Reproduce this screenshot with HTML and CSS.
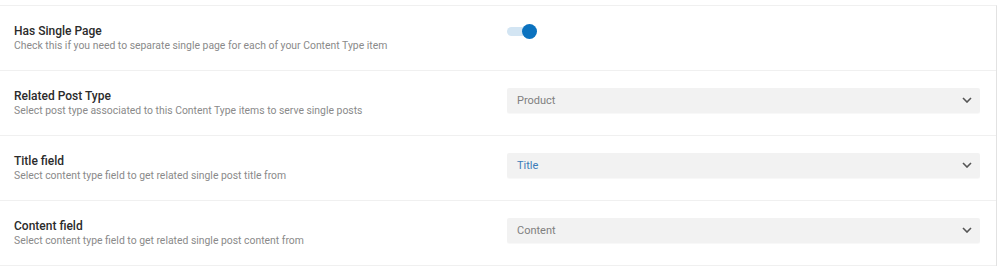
FILE: index.html
```html
<!DOCTYPE html>
<html lang="en">
<head>
    <meta charset="UTF-8">
    <meta name="viewport" content="width=device-width, initial-scale=1.0">
    <title>Single Page Settings</title>
    <link rel="stylesheet" href="styles.css">
</head>
<body>
    <div class="panel">
        <div class="row">
            <div class="field-info">
                <div class="field-title">Has Single Page</div>
                <div class="field-desc">Check this if you need to separate single page for each of your Content Type item</div>
            </div>
            <div class="field-control">
                <label class="switch">
                    <input type="checkbox" checked>
                    <span class="track"></span>
                    <span class="knob"></span>
                </label>
            </div>
        </div>

        <div class="row">
            <div class="field-info">
                <div class="field-title">Related Post Type</div>
                <div class="field-desc">Select post type associated to this Content Type items to serve single posts</div>
            </div>
            <div class="field-control">
                <div class="select">
                    <span class="select-value">Product</span>
                    <svg class="chevron" width="10" height="6" viewBox="0 0 10 6"><path d="M1 1l4 4 4-4" fill="none" stroke="#555" stroke-width="1.6"/></svg>
                </div>
            </div>
        </div>

        <div class="row">
            <div class="field-info">
                <div class="field-title">Title field</div>
                <div class="field-desc">Select content type field to get related single post title from</div>
            </div>
            <div class="field-control">
                <div class="select">
                    <span class="select-value selected">Title</span>
                    <svg class="chevron" width="10" height="6" viewBox="0 0 10 6"><path d="M1 1l4 4 4-4" fill="none" stroke="#555" stroke-width="1.6"/></svg>
                </div>
            </div>
        </div>

        <div class="row">
            <div class="field-info">
                <div class="field-title">Content field</div>
                <div class="field-desc">Select content type field to get related single post content from</div>
            </div>
            <div class="field-control">
                <div class="select">
                    <span class="select-value">Content</span>
                    <svg class="chevron" width="10" height="6" viewBox="0 0 10 6"><path d="M1 1l4 4 4-4" fill="none" stroke="#555" stroke-width="1.6"/></svg>
                </div>
            </div>
        </div>
    </div>
</body>
</html>
```

FILE: styles.css
```css
body {
    font-family: Roboto, "Liberation Sans", Arial, sans-serif;
    background-color: #fff;
    margin: 0;
    padding: 0;
}

.panel {
    margin-top: 5px;
    width: 997px;
    border-top: 1px solid #f0f0f0;
    border-right: 1px solid #e2e2e2;
    box-sizing: border-box;
}

.row {
    display: grid;
    grid-template-columns: 493px 1fr;
    align-items: center;
    height: 65px;
    padding: 0 16px 0 14px;
    border-bottom: 1px solid #f0f0f0;
    box-sizing: border-box;
}

.field-title {
    font-size: 12px;
    font-weight: 500;
    color: #2b2b2b;
    line-height: 15px;
}

.field-desc {
    font-size: 10.4px;
    color: #8a8a8a;
    line-height: 14px;
}

.field-control {
    display: flex;
    align-items: center;
}

.switch {
    position: relative;
    display: inline-block;
    width: 30px;
    height: 15px;
    margin-top: -14px;
}

.switch input {
    display: none;
}

.switch .track {
    position: absolute;
    left: 0;
    top: 3px;
    width: 24px;
    height: 9px;
    border-radius: 5px;
    background-color: #d3e5f3;
}

.switch .knob {
    position: absolute;
    left: 15px;
    top: 0;
    width: 15px;
    height: 15px;
    border-radius: 50%;
    background-color: #0b72bf;
}

.select {
    display: flex;
    justify-content: space-between;
    align-items: center;
    width: 100%;
    height: 25px;
    margin-bottom: 6px;
    padding: 0 8px 0 10px;
    background-color: #f2f2f2;
    border-radius: 2px;
    box-sizing: border-box;
    box-shadow: 0 1px 1px rgba(0, 0, 0, 0.03);
}

.select-value {
    font-size: 11px;
    color: #808080;
}

.select-value.selected {
    color: #3d7cb8;
}
```
